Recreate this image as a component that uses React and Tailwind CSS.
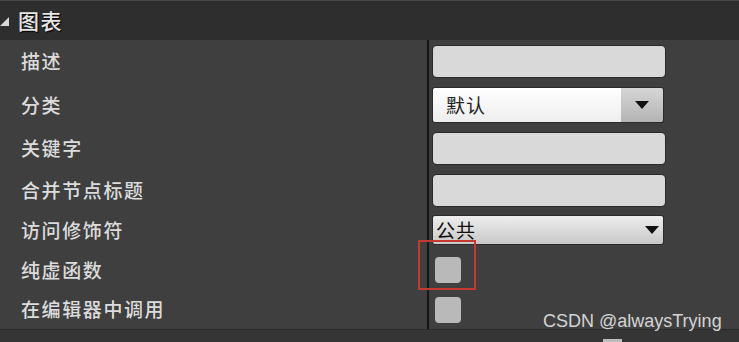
const rows = [
  { label: '描述', h: 'h-[43px]', kind: 'input' },
  { label: '分类', h: 'h-[44px]', kind: 'select1', value: '默认' },
  { label: '关键字', h: 'h-[43px]', kind: 'input' },
  { label: '合并节点标题', h: 'h-[40px]', kind: 'input' },
  { label: '访问修饰符', h: 'h-[40px]', kind: 'select2', value: '公共' },
  { label: '纯虚函数', h: 'h-[40px]', kind: 'check', marked: true },
  { label: '在编辑器中调用', h: 'h-[39px]', kind: 'check' },
];

function Arrow() {
  return (
    <svg width="14" height="8" viewBox="0 0 14 8">
      <path d="M0 0 H14 L7 8 Z" fill="#111" />
    </svg>
  );
}

function Field({ row }) {
  if (row.kind === 'input') {
    return <div className="w-[232px] h-[31px] rounded-[4px] bg-[#d9d9d9] shadow-[0_0_0_1px_#2a2a2a]" />;
  }
  if (row.kind === 'select1') {
    return (
      <div className="w-[230px] h-[34px] flex rounded-[2px] overflow-hidden shadow-[0_0_0_1px_#2a2a2a]">
        <div className="flex-1 flex items-center pl-[13px] text-[19px] text-[#222] tracking-[1px] bg-gradient-to-b from-white to-[#eeeeee]">
          {row.value}
        </div>
        <div className="w-[42px] flex items-center justify-center bg-gradient-to-b from-[#d6d6d6] to-[#b4b4b4]">
          <Arrow />
        </div>
      </div>
    );
  }
  if (row.kind === 'select2') {
    return (
      <div className="w-[230px] h-[28px] flex items-center justify-between pl-[3px] pr-[4px] rounded-[2px] bg-gradient-to-b from-[#eeeeee] to-[#c8c8c8] shadow-[0_0_0_1px_#2a2a2a] text-[19px] tracking-[1px] text-[#111]">
        <span>{row.value}</span>
        <Arrow />
      </div>
    );
  }
  return (
    <div className="relative">
      <div className="w-[26px] h-[26px] ml-[2px] rounded-[4px] bg-[#b9b9b9]" />
      {row.marked && (
        <div className="absolute left-[-15px] top-[-17px] w-[58px] h-[50px] border-2 border-solid border-[#c43a30]" />
      )}
    </div>
  );
}

export default function App() {
  return (
    <div
      className="relative w-[739px] h-[342px] overflow-hidden bg-[#3f3f3f] flex flex-col"
      style={{ fontFamily: '"Noto Sans CJK SC", "Noto Sans", sans-serif' }}
    >
      {/* Header */}
      <div className="h-[40px] shrink-0 flex items-center bg-[#2e2e2e] border-t border-[#4a4a4a]">
        <svg width="9" height="9" viewBox="0 0 9 9" className="mt-[1px]">
          <path d="M9 0 V9 H0 Z" fill="#d8d8d8" />
        </svg>
        <span className="ml-[9px] text-[21px] tracking-[1.5px] font-medium text-[#e6e6e6] [text-shadow:1px_1px_1px_#000]">图表</span>
      </div>

      {/* Rows */}
      <div className="flex">
        <div className="w-[427px] shrink-0 flex flex-col">
          {rows.map((r) => (
            <div key={r.label} className={`${r.h} flex items-center pl-[21px] text-[19px] tracking-[1.6px] font-medium text-[#dcdcdc]`}>
              {r.label}
            </div>
          ))}
        </div>
        <div className="w-[2px] bg-[#151515]" />
        <div className="flex flex-col pl-[4px]">
          {rows.map((r) => (
            <div key={r.label} className={`${r.h} flex items-center`}>
              <Field row={r} />
            </div>
          ))}
        </div>
      </div>

      {/* Bottom strip */}
      <div className="flex-1 bg-[#353535] border-t border-[#2a2a2a] flex items-end">
        <div className="ml-[603px] w-[19px] h-[3px] bg-[#bdbdbd]" />
      </div>

      <div
        className="absolute left-[543px] top-[308px] text-[18px] text-[#d4d4d4]"
        style={{ fontFamily: '"Liberation Sans", Arial, sans-serif' }}
      >
        CSDN @alwaysTrying
      </div>
    </div>
  );
}
